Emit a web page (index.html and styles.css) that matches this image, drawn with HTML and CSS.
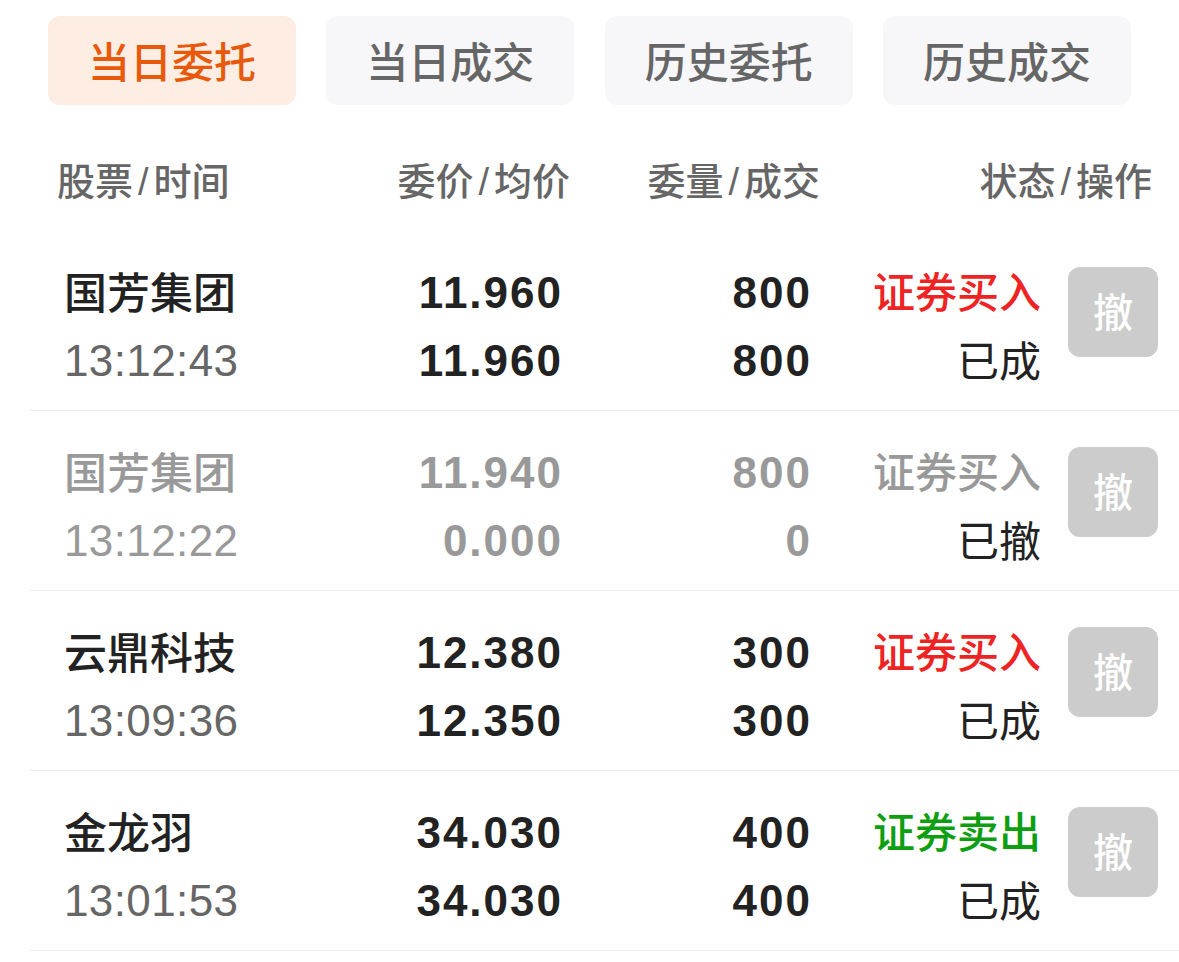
FILE: index.html
```html
<!DOCTYPE html>
<html lang="zh-CN">
<head>
<meta charset="utf-8">
<title>委托</title>
<link rel="stylesheet" href="styles.css">
</head>
<body>
<div class="tabs">
  <div class="tab active">当日委托</div>
  <div class="tab">当日成交</div>
  <div class="tab">历史委托</div>
  <div class="tab">历史成交</div>
</div>
<div class="head">
  <div class="h1">股票<span class="sl">/</span>时间</div>
  <div class="h2">委价<span class="sl">/</span>均价</div>
  <div class="h3">委量<span class="sl">/</span>成交</div>
  <div class="h4">状态<span class="sl">/</span>操作</div>
</div>
<div class="list">
  <div class="row">
    <div class="c c1"><div class="name">国芳集团</div><div class="time">13:12:43</div></div>
    <div class="c c2 num"><div>11.960</div><div>11.960</div></div>
    <div class="c c3 num"><div>800</div><div>800</div></div>
    <div class="c c4"><div class="side buy">证券买入</div><div class="st">已成</div></div>
    <div class="btn-wrap"><div class="btn">撤</div></div>
  </div>
  <div class="row muted">
    <div class="c c1"><div class="name">国芳集团</div><div class="time">13:12:22</div></div>
    <div class="c c2 num"><div>11.940</div><div>0.000</div></div>
    <div class="c c3 num"><div>800</div><div>0</div></div>
    <div class="c c4"><div class="side">证券买入</div><div class="st">已撤</div></div>
    <div class="btn-wrap"><div class="btn">撤</div></div>
  </div>
  <div class="row">
    <div class="c c1"><div class="name">云鼎科技</div><div class="time">13:09:36</div></div>
    <div class="c c2 num"><div>12.380</div><div>12.350</div></div>
    <div class="c c3 num"><div>300</div><div>300</div></div>
    <div class="c c4"><div class="side buy">证券买入</div><div class="st">已成</div></div>
    <div class="btn-wrap"><div class="btn">撤</div></div>
  </div>
  <div class="row">
    <div class="c c1"><div class="name">金龙羽</div><div class="time">13:01:53</div></div>
    <div class="c c2 num"><div>34.030</div><div>34.030</div></div>
    <div class="c c3 num"><div>400</div><div>400</div></div>
    <div class="c c4"><div class="side sell">证券卖出</div><div class="st">已成</div></div>
    <div class="btn-wrap"><div class="btn">撤</div></div>
  </div>
</div>
</body>
</html>
```
FILE: styles.css
```css
* { box-sizing: border-box; }
html, body { margin: 0; padding: 0; background: #fff; }
body {
  font-family: "Liberation Sans", "Noto Sans CJK SC", sans-serif;
  color: #222;
  width: 1179px;
  overflow: hidden;
}
.tabs {
  display: flex;
  gap: 30.33px;
  padding: 16px 0 0 48px;
}
.tab {
  width: 248px;
  height: 89px;
  border-radius: 12px;
  background: #f7f7f9;
  color: #666;
  font-size: 42px;
  font-weight: 500;
  display: flex;
  align-items: center;
  justify-content: center;
  font-family: "Noto Sans CJK SC", sans-serif;
  padding-bottom: 2px;
}
.tab.active {
  background: #fdede3;
  color: #e8590c;
}
.head {
  display: grid;
  grid-template-columns: 266px 247px 250px 332px;
  padding-left: 57px;
  margin-top: 45px;
  height: 56px;
  align-items: center;
  font-size: 38px;
  font-weight: 500;
  color: #666;
}
.sl { margin: 0 5px; }
.h2, .h3, .h4 { text-align: right; }
.list { margin-top: 25px; }
.row {
  margin-left: 30px;
  padding: 28px 21px 16px 34px;
  border-bottom: 1.5px solid #ececec;
  display: grid;
  grid-template-columns: 266px 231px 249px 231px 117px;
  height: 180px;
}
.c > div { height: 68px; line-height: 68px; white-space: nowrap; }
.name { font-size: 43px; font-weight: 500; font-family: "Noto Sans CJK SC", sans-serif; color: #222; }
.c1 > .name, .c4 > div { line-height: 62px; }
.time { font-size: 44px; color: #666; letter-spacing: 0.4px; }
.num { text-align: right; font-size: 44px; font-weight: 700; color: #222; letter-spacing: 2px; }
.num > div { margin-right: -2px; }
.c4 { text-align: right; font-family: "Noto Sans CJK SC", sans-serif; font-size: 42px; }
.c4 > .st { line-height: 64px; }
.side { font-weight: 500; }
.side.buy { color: #ee2424; }
.side.sell { color: #0e9e12; }
.st { color: #222; }
.btn-wrap { display: flex; justify-content: flex-end; padding-top: 8px; }
.btn {
  width: 90px;
  height: 90px;
  border-radius: 12px;
  background: #cccccc;
  color: #fff;
  font-size: 40px;
  font-weight: 500;
  font-family: "Noto Sans CJK SC", sans-serif;
  display: flex;
  align-items: center;
  justify-content: center;
  padding-bottom: 5px;
}
.row.muted .name, .row.muted .time, .row.muted .num, .row.muted .side { color: #999; }
```
